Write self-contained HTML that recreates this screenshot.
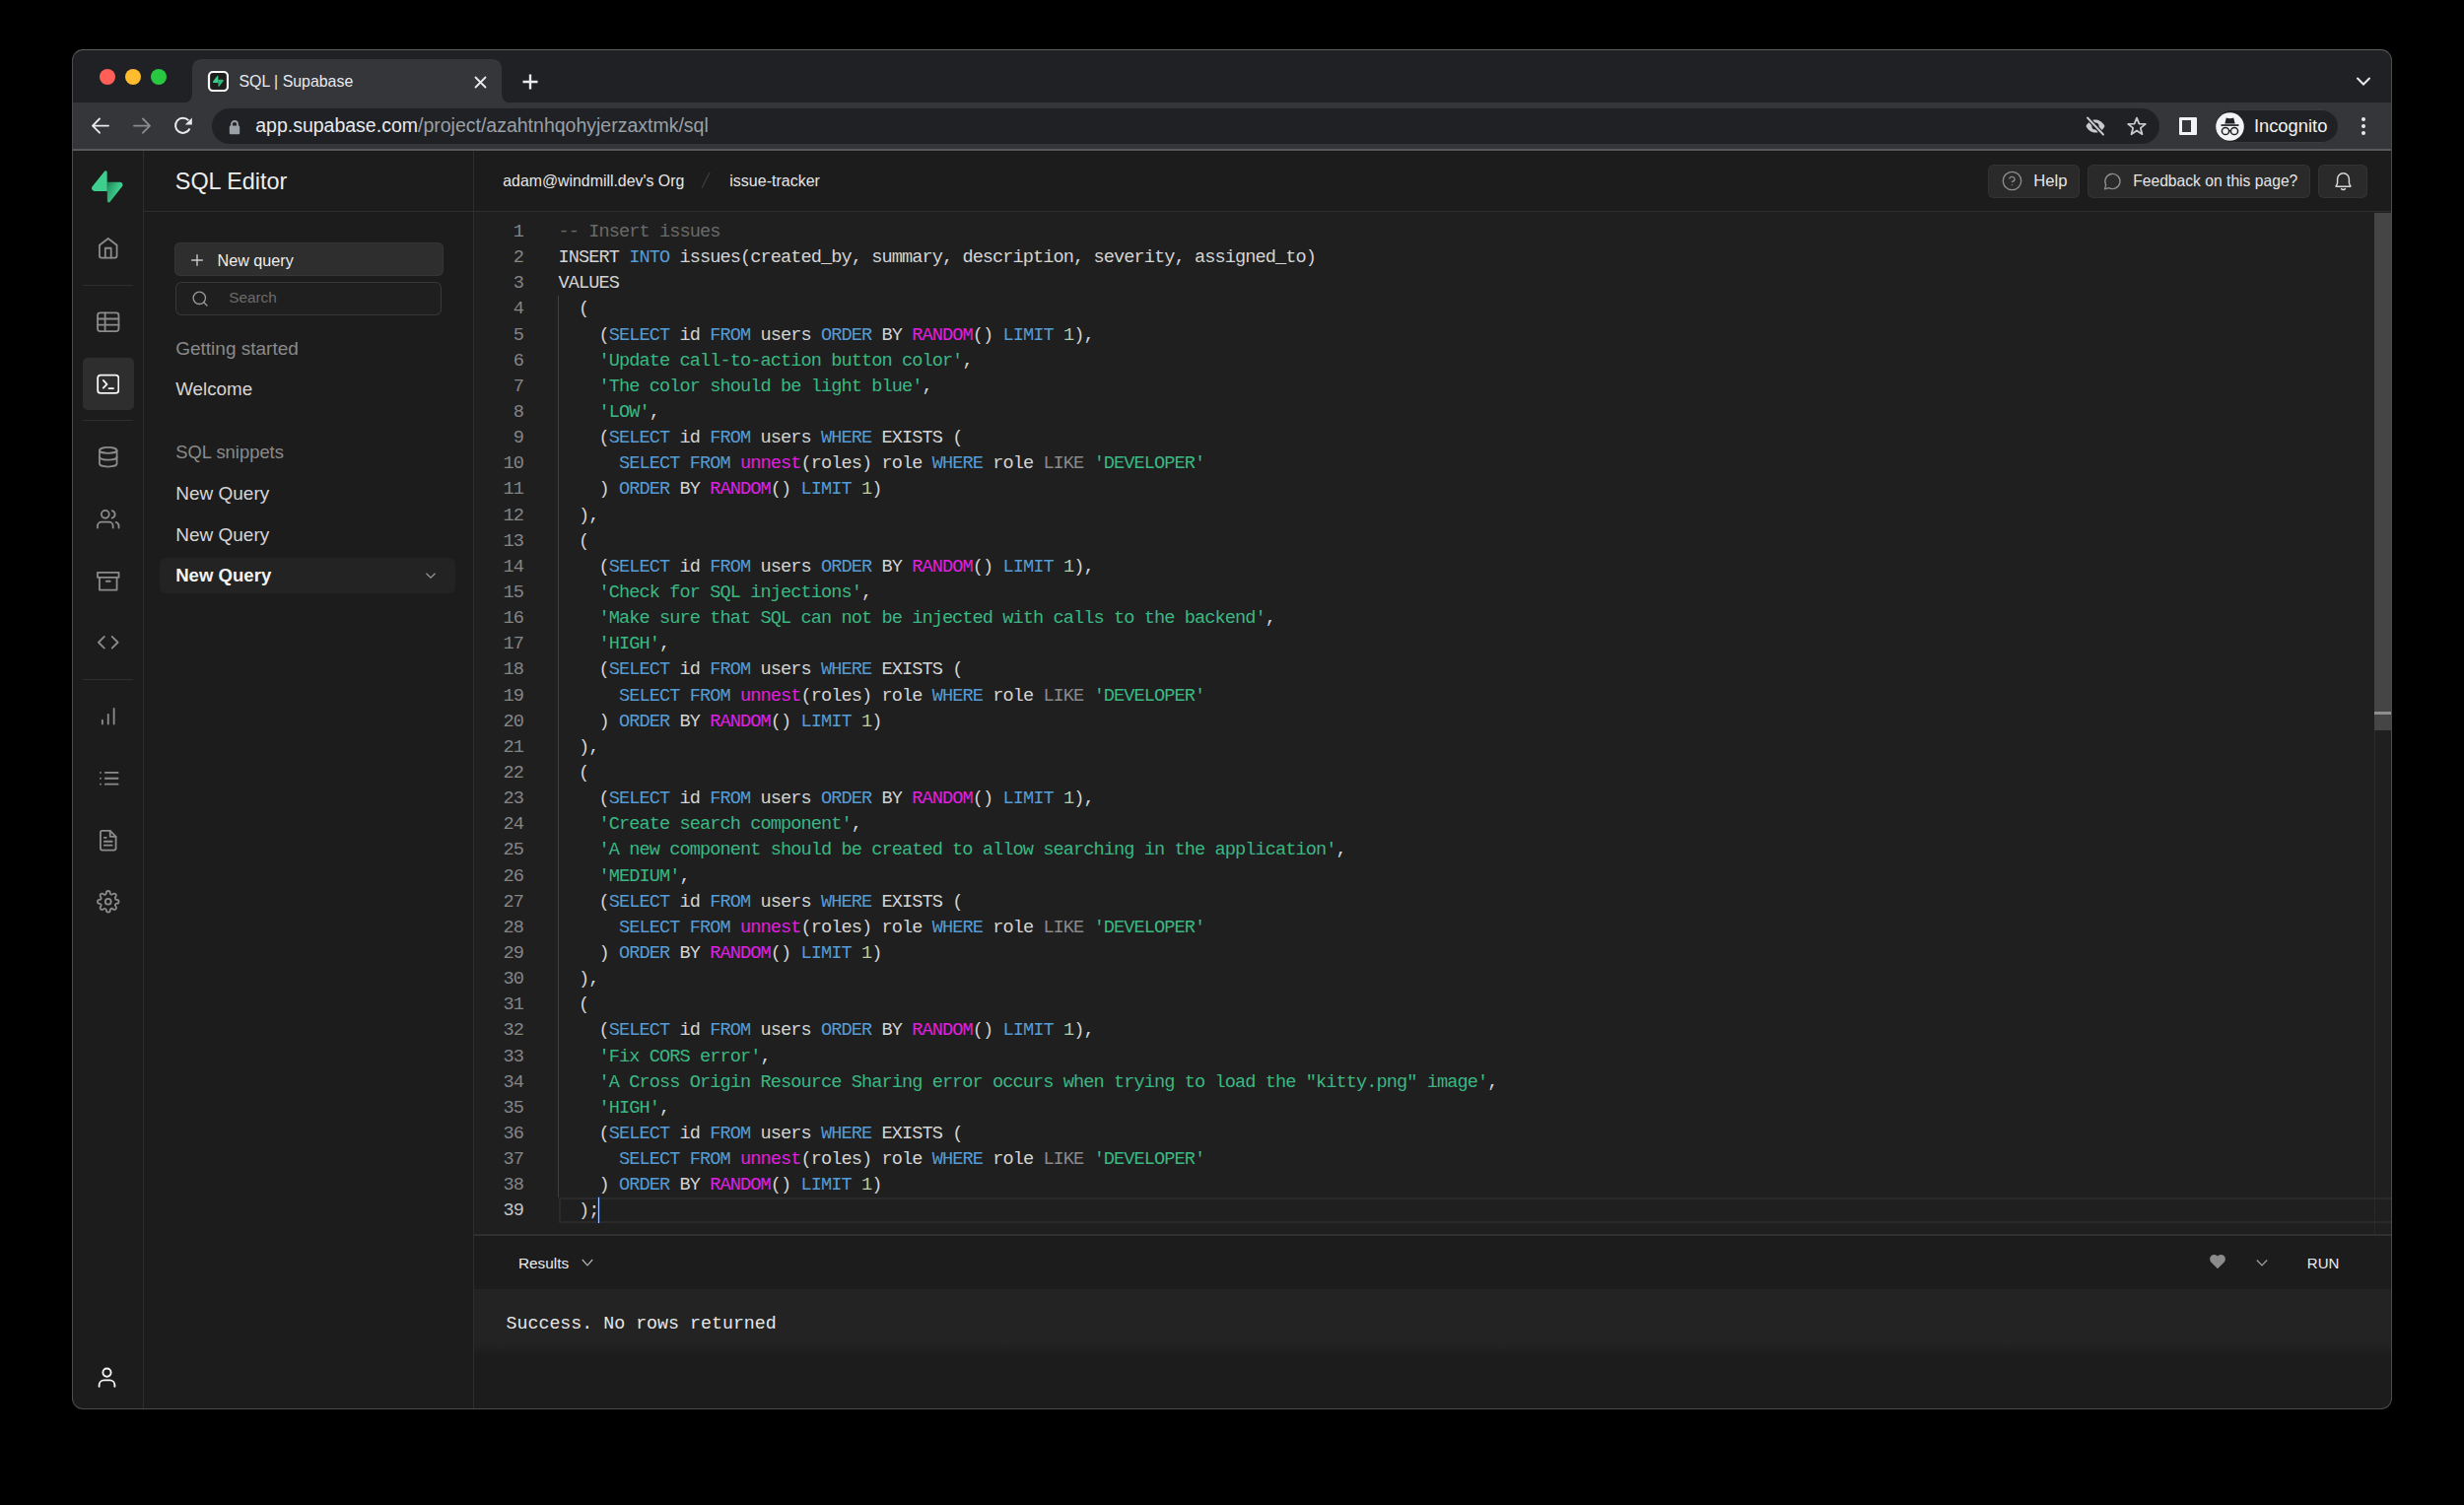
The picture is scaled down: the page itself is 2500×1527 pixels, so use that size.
<!DOCTYPE html>
<html><head><meta charset="utf-8"><title>SQL | Supabase</title>
<style>
html,body{margin:0;padding:0;background:#000;width:2500px;height:1527px;overflow:hidden}
.r{position:absolute;display:block}
.t{position:absolute;white-space:pre;font-family:"Liberation Sans",sans-serif}
.code{position:absolute;font-family:"Liberation Mono",monospace;font-size:18.6px;letter-spacing:-0.9117px;line-height:26.15px;white-space:pre}
.kw{color:#569cd6} .st{color:#3ab883} .fn{color:#e020e0} .op{color:#8a8a8a} .nu{color:#b5cea8} .cm{color:#6a6a6a}
</style></head><body>
<div class="r" style="left:73px;top:50px;width:2354px;height:1380px;border-radius:11px;overflow:hidden;background:#1c1c1c;"><div class="r" style="left:0px;top:0px;width:2354px;height:54px;background:#202124;"></div><div class="r" style="left:0px;top:54px;width:2354px;height:48px;background:#35363a;"></div><div class="r" style="left:0px;top:101px;width:2354px;height:1.5px;background:#58595c;"></div><div class="r" style="left:27.5px;top:19.8px;width:16.0px;height:15.999999999999996px;background:#ff5f57;border-radius:50%"></div><div class="r" style="left:53.6px;top:19.8px;width:15.999999999999993px;height:15.999999999999996px;background:#febc2e;border-radius:50%"></div><div class="r" style="left:79.7px;top:19.8px;width:16.0px;height:15.999999999999996px;background:#28c840;border-radius:50%"></div><svg class="r" style="left:112px;top:9px" width="335" height="46" viewBox="0 0 335 46">
<path d="M0 45.5 Q10 45.5 10 36 L10 11 Q10 1 20 1 L314 1 Q324 1 324 11 L324 36 Q324 45.5 334 45.5 L334 46 L0 46 Z" fill="#35363a"/></svg><svg class="r" style="left:136.5px;top:20.799999999999997px" width="22" height="22" viewBox="0 0 22 22">
<rect x="2" y="2" width="19" height="19" rx="4" fill="#1e1e1e" stroke="#f8f8f8" stroke-width="2.2"/>
<g transform="translate(6,5.8) scale(0.099)"><path d="M63.7 110.3C60.8 113.9 55.1 111.9 55 107.3L54 40.1H99.2C107.4 40.1 112 49.5 106.9 55.9Z" fill="#2fb57a"/><path d="M45.3 2.1C48.2 -1.5 54 0.4 54 5L54.5 72.3H9.8C1.6 72.3 -2.9 62.8 2.2 56.4Z" fill="#3ecf8e"/></g></svg><div class="t" style="left:169.50px;top:24.64px;font-size:15.9px;line-height:15.9px;color:#e8eaed;font-weight:400;font-family:'Liberation Sans', sans-serif;">SQL | Supabase</div><svg class="r" style="left:408px;top:26.5px" width="13" height="13" viewBox="0 0 13 13">
<path d="M1.5 1.5 L11.5 11.5 M11.5 1.5 L1.5 11.5" stroke="#e8eaed" stroke-width="1.8" stroke-linecap="round"/></svg><svg class="r" style="left:455.5px;top:23.5px" width="18" height="18" viewBox="0 0 18 18">
<path d="M9 1.5 V16.5 M1.5 9 H16.5" stroke="#e8eaed" stroke-width="2.4" stroke-linecap="butt"/></svg><svg class="r" style="left:2317px;top:27px" width="16" height="11" viewBox="0 0 16 11">
<path d="M2 2.5 L8 8.5 L14 2.5" stroke="#e8eaed" stroke-width="2" fill="none" stroke-linecap="round"/></svg><svg class="r" style="left:17px;top:66px" width="110" height="24" viewBox="0 0 110 24">
<path d="M20 11.6 H5 M11 4.5 L4 11.6 L11 18.7" stroke="#e8eaed" stroke-width="1.9" fill="none" stroke-linecap="round" stroke-linejoin="round"/>
<path d="M46 11.6 H61 M55 4.5 L62 11.6 L55 18.7" stroke="#8a8b8d" stroke-width="1.9" fill="none" stroke-linecap="round" stroke-linejoin="round"/>
<path d="M102.5 14.5 A7.6 7.6 0 1 1 101.3 6.2" stroke="#e8eaed" stroke-width="2" fill="none"/>
<path d="M104.8 3.6 V10.6 H97.8 Z" fill="#e8eaed"/>
</svg><div class="r" style="left:142px;top:60px;width:1975.5px;height:36px;background:#202124;border-radius:18px"></div><svg class="r" style="left:159px;top:70.5px" width="12" height="16" viewBox="0 0 12 16">
<path d="M3 7 V5 A3 3 0 0 1 9 5 V7" stroke="#9aa0a6" stroke-width="1.8" fill="none"/>
<rect x="0.8" y="6.6" width="10.4" height="8.6" rx="1.2" fill="#9aa0a6"/></svg><div class="t" style="left:186.20px;top:67.89px;font-size:19.5px;line-height:19.5px;color:#e8eaed;font-weight:400;font-family:'Liberation Sans', sans-serif;">app.supabase.com</div><div class="t" style="left:186.2px;top:67.89px;font-size:19.5px;line-height:19.5px;color:#9aa0a6;"><span style="color:transparent">app.supabase.com</span>/project/azahtnhqohyjerzaxtmk/sql</div><svg class="r" style="left:2041px;top:67px" width="24" height="22" viewBox="0 0 24 22">
<path d="M2.5 11 C5 6 9 4.5 12 4.5 C15 4.5 19 6 21.5 11 C19 16 15 17.5 12 17.5 C9 17.5 5 16 2.5 11 Z" fill="#c8c9cb"/>
<circle cx="12" cy="11" r="3.6" fill="#202124"/>
<path d="M4 2.5 L20 19.5" stroke="#202124" stroke-width="4.2"/>
<path d="M4 2.5 L20 19.5" stroke="#c8c9cb" stroke-width="1.9" stroke-linecap="round"/></svg><svg class="r" style="left:2084px;top:67px" width="22" height="22" viewBox="0 0 22 22">
<path d="M11 2.6 L13.4 8.6 L19.8 8.9 L14.8 12.9 L16.5 19.2 L11 15.6 L5.5 19.2 L7.2 12.9 L2.2 8.9 L8.6 8.6 Z" stroke="#c8c9cb" stroke-width="1.8" fill="none" stroke-linejoin="round"/></svg><div class="r" style="left:2138px;top:69px;width:18px;height:18.200000000000003px;background:#f1f3f4;border-radius:1px"></div><div class="r" style="left:2141px;top:71.9px;width:8.699999999999818px;height:12.399999999999991px;background:#35363a;"></div><div class="r" style="left:2173.6px;top:60.8px;width:126.40000000000009px;height:34.3px;background:#202124;border-radius:17px;box-shadow:inset 0 0 0 1px #3a3b3e"></div><svg class="r" style="left:2174.5px;top:63.5px" width="29" height="29" viewBox="0 0 29 29">
<circle cx="14.5" cy="14.5" r="14.3" fill="#f1f3f4"/>
<path d="M9.3 11.6 L10.8 5.6 Q14.5 6.8 18.2 5.6 L19.7 11.6 Z" fill="#202124"/>
<rect x="5.5" y="12.2" width="18" height="1.7" fill="#202124"/>
<circle cx="10" cy="19" r="3.6" stroke="#202124" stroke-width="1.5" fill="none"/>
<circle cx="19" cy="19" r="3.6" stroke="#202124" stroke-width="1.5" fill="none"/>
<path d="M13.4 19 Q14.5 18.2 15.6 19" stroke="#202124" stroke-width="1.3" fill="none"/></svg><div class="t" style="left:2213.90px;top:69.16px;font-size:18.35px;line-height:18.35px;color:#f1f3f4;font-weight:400;font-family:'Liberation Sans', sans-serif;">Incognito</div><svg class="r" style="left:2321px;top:63px" width="8" height="30" viewBox="0 0 8 30">
<circle cx="4" cy="8" r="2" fill="#e8eaed"/><circle cx="4" cy="15" r="2" fill="#e8eaed"/><circle cx="4" cy="22" r="2" fill="#e8eaed"/></svg><div class="r" style="left:0px;top:102.5px;width:72px;height:1277.5px;background:#1c1c1c;"></div><div class="r" style="left:72px;top:102.5px;width:1px;height:1277.5px;background:#2e2e2e;"></div><div class="r" style="left:73px;top:102.5px;width:334px;height:1277.5px;background:#1c1c1c;"></div><div class="r" style="left:407px;top:102.5px;width:1px;height:1277.5px;background:#2e2e2e;"></div><div class="r" style="left:73px;top:164px;width:334px;height:1px;background:#2e2e2e;"></div><div class="r" style="left:408px;top:102.5px;width:1946px;height:61.5px;background:#1c1c1c;"></div><div class="r" style="left:408px;top:164px;width:1946px;height:1px;background:#2e2e2e;"></div><svg class="r" style="left:20.299999999999997px;top:123px" width="31.5" height="32.8" viewBox="0 0 109 113">
<defs><linearGradient id="g0" x1="53.97" y1="54.97" x2="94.16" y2="71.83" gradientUnits="userSpaceOnUse"><stop stop-color="#249361"/><stop offset="1" stop-color="#3ECF8E"/></linearGradient>
<linearGradient id="g1" x1="36.16" y1="30.58" x2="54.48" y2="65.08" gradientUnits="userSpaceOnUse"><stop/><stop offset="1" stop-opacity="0"/></linearGradient></defs>
<path d="M63.7076 110.284C60.8481 113.885 55.0502 111.912 54.9813 107.314L53.9738 40.0627L99.1935 40.0627C107.384 40.0627 111.952 49.5228 106.859 55.9374L63.7076 110.284Z" fill="url(#g0)"/>
<path d="M63.7076 110.284C60.8481 113.885 55.0502 111.912 54.9813 107.314L53.9738 40.0627L99.1935 40.0627C107.384 40.0627 111.952 49.5228 106.859 55.9374L63.7076 110.284Z" fill="url(#g1)" fill-opacity="0.2"/>
<path d="M45.317 2.07103C48.1765 -1.53037 53.9745 0.442937 54.0434 5.041L54.4849 72.2922H9.83113C1.64038 72.2922 -2.92775 62.8321 2.1655 56.4175L45.317 2.07103Z" fill="#3ECF8E"/></svg><svg class="r" style="left:25.14px;top:190.24px" width="23.52" height="23.52" viewBox="0 0 24 24" fill="none" stroke="#8b8b8b" stroke-width="1.85" stroke-linecap="round" stroke-linejoin="round"><path d="M3 9l9-7 9 7v11a2 2 0 0 1-2 2H5a2 2 0 0 1-2-2z"/><polyline points="9 22 9 12 15 12 15 22"/></svg><div class="r" style="left:11px;top:239px;width:51px;height:1px;background:#2e2e2e;"></div><svg class="r" style="left:24.99px;top:265.04px" width="23.52" height="23.52" viewBox="0 0 24 24" fill="none" stroke="#8b8b8b" stroke-width="1.85" stroke-linecap="round" stroke-linejoin="round"><rect x="1.1" y="2.5" width="21.8" height="19" rx="2.5"/><path d="M8.8 2.5v19M1.1 8.7h21.8M1.1 14.9h21.8"/></svg><div class="r" style="left:11px;top:313px;width:51.7px;height:53px;background:#2e2e2e;border-radius:5px"></div><svg class="r" style="left:24.94px;top:327.74px" width="23.52" height="23.52" viewBox="0 0 24 24" fill="none" stroke="#f5f5f5" stroke-width="1.85" stroke-linecap="round" stroke-linejoin="round"><rect x="1.2" y="2.7" width="21.6" height="18.6" rx="3"/><polyline points="6.95 8 10.7 12 6.95 16"/><path d="M12.75 16.4h4.6"/></svg><div class="r" style="left:11px;top:376px;width:51px;height:1px;background:#2e2e2e;"></div><svg class="r" style="left:25.09px;top:402.24px" width="23.52" height="23.52" viewBox="0 0 24 24" fill="none" stroke="#8b8b8b" stroke-width="1.85" stroke-linecap="round" stroke-linejoin="round"><ellipse cx="12" cy="5" rx="9" ry="3"/><path d="M21 12c0 1.66-4 3-9 3s-9-1.34-9-3"/><path d="M3 5v14c0 1.66 4 3 9 3s9-1.34 9-3V5"/></svg><svg class="r" style="left:24.99px;top:465.24px" width="23.52" height="23.52" viewBox="0 0 24 24" fill="none" stroke="#8b8b8b" stroke-width="1.85" stroke-linecap="round" stroke-linejoin="round"><path d="M17 21v-2a4 4 0 0 0-4-4H5a4 4 0 0 0-4 4v2"/><circle cx="9" cy="7" r="4"/><path d="M23 21v-2a4 4 0 0 0-3-3.87"/><path d="M16 3.13a4 4 0 0 1 0 7.75"/></svg><svg class="r" style="left:24.99px;top:527.74px" width="23.52" height="23.52" viewBox="0 0 24 24" fill="none" stroke="#8b8b8b" stroke-width="1.85" stroke-linecap="round" stroke-linejoin="round"><polyline points="21 8 21 21 3 21 3 8"/><rect x="1" y="3" width="22" height="5"/><line x1="10" y1="12" x2="14" y2="12"/></svg><svg class="r" style="left:25.09px;top:590.44px" width="23.52" height="23.52" viewBox="0 0 24 24" fill="none" stroke="#8b8b8b" stroke-width="1.85" stroke-linecap="round" stroke-linejoin="round"><polyline points="16 18 22 12 16 6"/><polyline points="8 6 2 12 8 18"/></svg><div class="r" style="left:11px;top:638.5px;width:51px;height:1.0px;background:#2e2e2e;"></div><svg class="r" style="left:25.24px;top:665.14px" width="23.52" height="23.52" viewBox="0 0 24 24" fill="none" stroke="#8b8b8b" stroke-width="1.85" stroke-linecap="round" stroke-linejoin="round"><line x1="18" y1="20" x2="18" y2="4"/><line x1="12" y1="20" x2="12" y2="10"/><line x1="6" y1="20" x2="6" y2="16"/></svg><svg class="r" style="left:25.54px;top:727.84px" width="23.52" height="23.52" viewBox="0 0 24 24" fill="none" stroke="#8b8b8b" stroke-width="1.85" stroke-linecap="round" stroke-linejoin="round"><line x1="8" y1="6" x2="21" y2="6"/><line x1="8" y1="12" x2="21" y2="12"/><line x1="8" y1="18" x2="21" y2="18"/><line x1="3" y1="6" x2="3.01" y2="6"/><line x1="3" y1="12" x2="3.01" y2="12"/><line x1="3" y1="18" x2="3.01" y2="18"/></svg><svg class="r" style="left:25.34px;top:790.64px" width="23.52" height="23.52" viewBox="0 0 24 24" fill="none" stroke="#8b8b8b" stroke-width="1.85" stroke-linecap="round" stroke-linejoin="round"><path d="M14 2H6a2 2 0 0 0-2 2v16a2 2 0 0 0 2 2h12a2 2 0 0 0 2-2V8z"/><polyline points="14 2 14 8 20 8"/><line x1="16" y1="13" x2="8" y2="13"/><line x1="16" y1="17" x2="8" y2="17"/><polyline points="10 9 9 9 8 9"/></svg><svg class="r" style="left:25.14px;top:853.44px" width="23.52" height="23.52" viewBox="0 0 24 24" fill="none" stroke="#8b8b8b" stroke-width="1.85" stroke-linecap="round" stroke-linejoin="round"><circle cx="12" cy="12" r="3"/><path d="M19.4 15a1.65 1.65 0 0 0 .33 1.82l.06.06a2 2 0 0 1 0 2.83 2 2 0 0 1-2.83 0l-.06-.06a1.65 1.65 0 0 0-1.82-.33 1.65 1.65 0 0 0-1 1.51V21a2 2 0 0 1-2 2 2 2 0 0 1-2-2v-.09A1.65 1.65 0 0 0 9 19.4a1.65 1.65 0 0 0-1.82.33l-.06.06a2 2 0 0 1-2.83 0 2 2 0 0 1 0-2.830l.06-.06a1.65 1.65 0 0 0 .33-1.82 1.65 1.65 0 0 0-1.51-1H3a2 2 0 0 1-2-2 2 2 0 0 1 2-2h.09A1.65 1.65 0 0 0 4.6 9a1.65 1.65 0 0 0-.33-1.82l-.06-.06a2 2 0 0 1 0-2.83 2 2 0 0 1 2.83 0l.06.06a1.65 1.65 0 0 0 1.82.33H9a1.65 1.65 0 0 0 1-1.51V3a2 2 0 0 1 2-2 2 2 0 0 1 2 2v.09a1.65 1.65 0 0 0 1 1.51 1.65 1.65 0 0 0 1.82-.33l.06-.06a2 2 0 0 1 2.83 0 2 2 0 0 1 0 2.83l-.06.06a1.65 1.65 0 0 0-.33 1.82V9a1.65 1.65 0 0 0 1.51 1H21a2 2 0 0 1 2 2 2 2 0 0 1-2 2h-.09a1.65 1.65 0 0 0-1.51 1z"/></svg><svg class="r" style="left:23px;top:1334px" width="25" height="27" viewBox="0 0 25 27" fill="none" stroke="#f5f5f5" stroke-width="1.9" stroke-linecap="round">
<circle cx="12.5" cy="8.6" r="4.1"/><path d="M4.6 22.8 V21.4 A5 5 0 0 1 9.6 16.4 H15.4 A5 5 0 0 1 20.4 21.4 V22.8"/></svg><div class="t" style="left:104.80px;top:123.09px;font-size:23.4px;line-height:23.4px;color:#ededed;font-weight:400;font-family:'Liberation Sans', sans-serif;">SQL Editor</div><div class="r" style="left:104px;top:196px;width:273px;height:34px;background:#2e2e2e;border-radius:6px;box-shadow:inset 0 0 0 1px #363636"></div><svg class="r" style="left:120px;top:207px" width="14" height="14" viewBox="0 0 14 14">
<path d="M7 1.2V12.8M1.2 7H12.8" stroke="#c8c8c8" stroke-width="1.4"/></svg><div class="t" style="left:147.60px;top:205.63px;font-size:16.15px;line-height:16.15px;color:#ededed;font-weight:400;font-family:'Liberation Sans', sans-serif;">New query</div><div class="r" style="left:105px;top:236px;width:270px;height:33.5px;background:#1f1f1f;border-radius:6px;box-shadow:inset 0 0 0 1px #383838"></div><svg class="r" style="left:120.5px;top:243.5px" width="18" height="18" viewBox="0 0 18 18" fill="none" stroke="#9a9a9a" stroke-width="1.3" stroke-linecap="round">
<circle cx="8.3" cy="8.3" r="6.2"/><path d="M12.8 12.8L16 16"/></svg><div class="t" style="left:159.20px;top:244.35px;font-size:15.3px;line-height:15.3px;color:#6b6b6b;font-weight:400;font-family:'Liberation Sans', sans-serif;">Search</div><div class="t" style="left:105.20px;top:293.91px;font-size:19.0px;line-height:19.0px;color:#8a8a8a;font-weight:400;font-family:'Liberation Sans', sans-serif;">Getting started</div><div class="t" style="left:105.20px;top:335.98px;font-size:18.8px;line-height:18.8px;color:#d6d6d6;font-weight:400;font-family:'Liberation Sans', sans-serif;">Welcome</div><div class="t" style="left:105.20px;top:400.02px;font-size:18.4px;line-height:18.4px;color:#8a8a8a;font-weight:400;font-family:'Liberation Sans', sans-serif;">SQL snippets</div><div class="t" style="left:105.20px;top:440.91px;font-size:19.0px;line-height:19.0px;color:#d6d6d6;font-weight:400;font-family:'Liberation Sans', sans-serif;">New Query</div><div class="t" style="left:105.20px;top:482.91px;font-size:19.0px;line-height:19.0px;color:#d6d6d6;font-weight:400;font-family:'Liberation Sans', sans-serif;">New Query</div><div class="r" style="left:89.4px;top:516px;width:299.9px;height:35.700000000000045px;background:#232323;border-radius:6px"></div><div class="t" style="left:105.20px;top:524.87px;font-size:18.58px;line-height:18.58px;color:#f4f4f4;font-weight:700;font-family:'Liberation Sans', sans-serif;">New Query</div><svg class="r" style="left:358px;top:530px" width="12" height="8" viewBox="0 0 12 8">
<path d="M1.5 1.8L6 6.2L10.5 1.8" stroke="#9a9a9a" stroke-width="1.2" fill="none"/></svg><div class="t" style="left:437.30px;top:126.37px;font-size:15.86px;line-height:15.86px;color:#e6e6e6;font-weight:400;font-family:'Liberation Sans', sans-serif;">adam@windmill.dev&#x27;s Org</div><svg class="r" style="left:637px;top:123px" width="12" height="20" viewBox="0 0 12 20">
<path d="M10 2L2 18" stroke="#3e3e3e" stroke-width="1.2"/></svg><div class="t" style="left:667.30px;top:126.25px;font-size:16.0px;line-height:16.0px;color:#e6e6e6;font-weight:400;font-family:'Liberation Sans', sans-serif;">issue-tracker</div><div class="r" style="left:1943.8px;top:116.8px;width:93.5px;height:33.8px;background:#2a2a2a;border-radius:6px;box-shadow:inset 0 0 0 1px #333"></div><svg class="r" style="left:1958px;top:123px" width="21" height="21" viewBox="0 0 21 21" fill="none" stroke="#8e8e8e" stroke-width="1.3" stroke-linecap="round">
<circle cx="10.5" cy="10.5" r="9.2"/><path d="M7.9 8.1a2.7 2.7 0 0 1 5.2.9c0 1.8-2.6 2.5-2.6 2.5"/><path d="M10.5 14.6h.01"/></svg><div class="t" style="left:1990.20px;top:125.60px;font-size:16.65px;line-height:16.65px;color:#e6e6e6;font-weight:400;font-family:'Liberation Sans', sans-serif;">Help</div><div class="r" style="left:2045.3px;top:116.8px;width:225.70000000000005px;height:33.8px;background:#2a2a2a;border-radius:6px;box-shadow:inset 0 0 0 1px #333"></div><svg class="r" style="left:2060px;top:124px" width="20" height="20" viewBox="0 0 20 20" fill="none" stroke="#8e8e8e" stroke-width="1.3" stroke-linejoin="round">
<path d="M2.5 17.8 L3.7 13.6 A7.6 7.6 0 1 1 6.6 16.6 Z"/></svg><div class="t" style="left:2091.20px;top:126.44px;font-size:15.66px;line-height:15.66px;color:#e6e6e6;font-weight:400;font-family:'Liberation Sans', sans-serif;">Feedback on this page?</div><div class="r" style="left:2279.2px;top:116.8px;width:49.5px;height:33.8px;background:#2a2a2a;border-radius:6px;box-shadow:inset 0 0 0 1px #333"></div><svg class="r" style="left:2294px;top:123px" width="21" height="22" viewBox="0 0 21 22" fill="none" stroke="#d8d8d8" stroke-width="1.5" stroke-linejoin="round" stroke-linecap="round">
<path d="M3.2 16.2 V15.6 Q4.6 14.5 4.6 12 V8.6 A5.9 5.9 0 0 1 16.4 8.6 V12 Q16.4 14.5 17.8 15.6 V16.2 Z"/><path d="M8.6 18.6 Q10.5 20.4 12.4 18.6"/></svg><div class="r" style="left:408px;top:165px;width:1946px;height:1038px;background:#1f1f1f;"></div><div class="r" style="left:2335.5px;top:165px;width:1.0px;height:1038px;background:#2b2b2b;"></div><div class="r" style="left:2335.5px;top:165.8px;width:18.5px;height:525.2px;background:#454545;"></div><div class="r" style="left:2336px;top:672.3px;width:18px;height:3.0px;background:#8e8e8e;"></div><div class="r" style="left:493.5px;top:1164.6px;width:1864.5px;height:26.200000000000045px;background:transparent;box-shadow:inset 0 0 0 2px #2a2a2a"></div><div class="r" style="left:493.1px;top:249.5px;width:1.1999999999999886px;height:915.0999999999999px;background:#404040;"></div><div class="code" style="left:385.5px;top:173.0px;width:72.5px;text-align:right;color:#858585"><div style="height:26.15px;">1</div><div style="height:26.15px;">2</div><div style="height:26.15px;">3</div><div style="height:26.15px;">4</div><div style="height:26.15px;">5</div><div style="height:26.15px;">6</div><div style="height:26.15px;">7</div><div style="height:26.15px;">8</div><div style="height:26.15px;">9</div><div style="height:26.15px;">10</div><div style="height:26.15px;">11</div><div style="height:26.15px;">12</div><div style="height:26.15px;">13</div><div style="height:26.15px;">14</div><div style="height:26.15px;">15</div><div style="height:26.15px;">16</div><div style="height:26.15px;">17</div><div style="height:26.15px;">18</div><div style="height:26.15px;">19</div><div style="height:26.15px;">20</div><div style="height:26.15px;">21</div><div style="height:26.15px;">22</div><div style="height:26.15px;">23</div><div style="height:26.15px;">24</div><div style="height:26.15px;">25</div><div style="height:26.15px;">26</div><div style="height:26.15px;">27</div><div style="height:26.15px;">28</div><div style="height:26.15px;">29</div><div style="height:26.15px;">30</div><div style="height:26.15px;">31</div><div style="height:26.15px;">32</div><div style="height:26.15px;">33</div><div style="height:26.15px;">34</div><div style="height:26.15px;">35</div><div style="height:26.15px;">36</div><div style="height:26.15px;">37</div><div style="height:26.15px;">38</div><div style="height:26.15px;color:#c6c6c6">39</div></div><div class="code" style="left:493.5px;top:173.0px;color:#d4d4d4"><div style="height:26.15px"><span class="cm">-- Insert issues</span></div><div style="height:26.15px">INSERT <span class="kw">INTO</span> issues(created_by, summary, description, severity, assigned_to)</div><div style="height:26.15px">VALUES</div><div style="height:26.15px">  (</div><div style="height:26.15px">    (<span class="kw">SELECT</span> id <span class="kw">FROM</span> users <span class="kw">ORDER</span> BY <span class="fn">RANDOM</span>() <span class="kw">LIMIT</span> <span class="nu">1</span>),</div><div style="height:26.15px">    <span class="st">&#x27;Update call-to-action button color&#x27;</span>,</div><div style="height:26.15px">    <span class="st">&#x27;The color should be light blue&#x27;</span>,</div><div style="height:26.15px">    <span class="st">&#x27;LOW&#x27;</span>,</div><div style="height:26.15px">    (<span class="kw">SELECT</span> id <span class="kw">FROM</span> users <span class="kw">WHERE</span> EXISTS (</div><div style="height:26.15px">      <span class="kw">SELECT</span> <span class="kw">FROM</span> <span class="fn">unnest</span>(roles) role <span class="kw">WHERE</span> role <span class="op">LIKE</span> <span class="st">&#x27;DEVELOPER&#x27;</span></div><div style="height:26.15px">    ) <span class="kw">ORDER</span> BY <span class="fn">RANDOM</span>() <span class="kw">LIMIT</span> <span class="nu">1</span>)</div><div style="height:26.15px">  ),</div><div style="height:26.15px">  (</div><div style="height:26.15px">    (<span class="kw">SELECT</span> id <span class="kw">FROM</span> users <span class="kw">ORDER</span> BY <span class="fn">RANDOM</span>() <span class="kw">LIMIT</span> <span class="nu">1</span>),</div><div style="height:26.15px">    <span class="st">&#x27;Check for SQL injections&#x27;</span>,</div><div style="height:26.15px">    <span class="st">&#x27;Make sure that SQL can not be injected with calls to the backend&#x27;</span>,</div><div style="height:26.15px">    <span class="st">&#x27;HIGH&#x27;</span>,</div><div style="height:26.15px">    (<span class="kw">SELECT</span> id <span class="kw">FROM</span> users <span class="kw">WHERE</span> EXISTS (</div><div style="height:26.15px">      <span class="kw">SELECT</span> <span class="kw">FROM</span> <span class="fn">unnest</span>(roles) role <span class="kw">WHERE</span> role <span class="op">LIKE</span> <span class="st">&#x27;DEVELOPER&#x27;</span></div><div style="height:26.15px">    ) <span class="kw">ORDER</span> BY <span class="fn">RANDOM</span>() <span class="kw">LIMIT</span> <span class="nu">1</span>)</div><div style="height:26.15px">  ),</div><div style="height:26.15px">  (</div><div style="height:26.15px">    (<span class="kw">SELECT</span> id <span class="kw">FROM</span> users <span class="kw">ORDER</span> BY <span class="fn">RANDOM</span>() <span class="kw">LIMIT</span> <span class="nu">1</span>),</div><div style="height:26.15px">    <span class="st">&#x27;Create search component&#x27;</span>,</div><div style="height:26.15px">    <span class="st">&#x27;A new component should be created to allow searching in the application&#x27;</span>,</div><div style="height:26.15px">    <span class="st">&#x27;MEDIUM&#x27;</span>,</div><div style="height:26.15px">    (<span class="kw">SELECT</span> id <span class="kw">FROM</span> users <span class="kw">WHERE</span> EXISTS (</div><div style="height:26.15px">      <span class="kw">SELECT</span> <span class="kw">FROM</span> <span class="fn">unnest</span>(roles) role <span class="kw">WHERE</span> role <span class="op">LIKE</span> <span class="st">&#x27;DEVELOPER&#x27;</span></div><div style="height:26.15px">    ) <span class="kw">ORDER</span> BY <span class="fn">RANDOM</span>() <span class="kw">LIMIT</span> <span class="nu">1</span>)</div><div style="height:26.15px">  ),</div><div style="height:26.15px">  (</div><div style="height:26.15px">    (<span class="kw">SELECT</span> id <span class="kw">FROM</span> users <span class="kw">ORDER</span> BY <span class="fn">RANDOM</span>() <span class="kw">LIMIT</span> <span class="nu">1</span>),</div><div style="height:26.15px">    <span class="st">&#x27;Fix CORS error&#x27;</span>,</div><div style="height:26.15px">    <span class="st">&#x27;A Cross Origin Resource Sharing error occurs when trying to load the &quot;kitty.png&quot; image&#x27;</span>,</div><div style="height:26.15px">    <span class="st">&#x27;HIGH&#x27;</span>,</div><div style="height:26.15px">    (<span class="kw">SELECT</span> id <span class="kw">FROM</span> users <span class="kw">WHERE</span> EXISTS (</div><div style="height:26.15px">      <span class="kw">SELECT</span> <span class="kw">FROM</span> <span class="fn">unnest</span>(roles) role <span class="kw">WHERE</span> role <span class="op">LIKE</span> <span class="st">&#x27;DEVELOPER&#x27;</span></div><div style="height:26.15px">    ) <span class="kw">ORDER</span> BY <span class="fn">RANDOM</span>() <span class="kw">LIMIT</span> <span class="nu">1</span>)</div><div style="height:26.15px">  );</div></div><div class="r" style="left:532.8px;top:1164.2px;width:2.800000000000068px;height:27.299999999999955px;background:#1c3a66;"></div><div class="r" style="left:533.6px;top:1165px;width:1.1999999999999318px;height:25.700000000000045px;background:#a6c4ee;"></div><div class="r" style="left:408px;top:1202px;width:1946px;height:2px;background:#303030;"></div><div class="r" style="left:408px;top:1204px;width:1946px;height:54px;background:#1c1c1c;"></div><div class="t" style="left:453.00px;top:1223.60px;font-size:15.35px;line-height:15.35px;color:#ededed;font-weight:400;font-family:'Liberation Sans', sans-serif;">Results</div><svg class="r" style="left:515.5px;top:1225px" width="14" height="12" viewBox="0 0 14 12">
<path d="M1.8 3L7 8.8L12.2 3" stroke="#b5b5b5" stroke-width="1.2" fill="none"/></svg><svg class="r" style="left:2168px;top:1221.8px" width="18" height="16" viewBox="0 0 18 16">
<path d="M9 15.2 L2.2 8.4 A4.1 4.1 0 0 1 9 2.6 A4.1 4.1 0 0 1 15.8 8.4 Z" fill="#8b8b8b"/></svg><svg class="r" style="left:2214.5px;top:1225.5px" width="14" height="12" viewBox="0 0 14 12">
<path d="M1.8 2.5L7 8L12.2 2.5" stroke="#a0a0a0" stroke-width="1.2" fill="none"/></svg><div class="t" style="left:2267.80px;top:1224.40px;font-size:15.0px;line-height:15.0px;color:#ededed;font-weight:400;font-family:'Liberation Sans', sans-serif;">RUN</div><div class="r" style="left:408px;top:1258px;width:1946px;height:68px;background:linear-gradient(#232323 0%,#232323 80%,#1c1c1c 100%);"></div><div class="t" style="left:440.50px;top:1284.28px;font-size:18.3px;line-height:18.3px;color:#e6e6e6;font-weight:400;font-family:'Liberation Mono', monospace;">Success. No rows returned</div><div class="r" style="left:0;top:0;width:2352px;height:1378px;border:1px solid #4b4b4b;border-top-color:#5e5e5e;border-radius:11px;"></div></div>
</body></html>
